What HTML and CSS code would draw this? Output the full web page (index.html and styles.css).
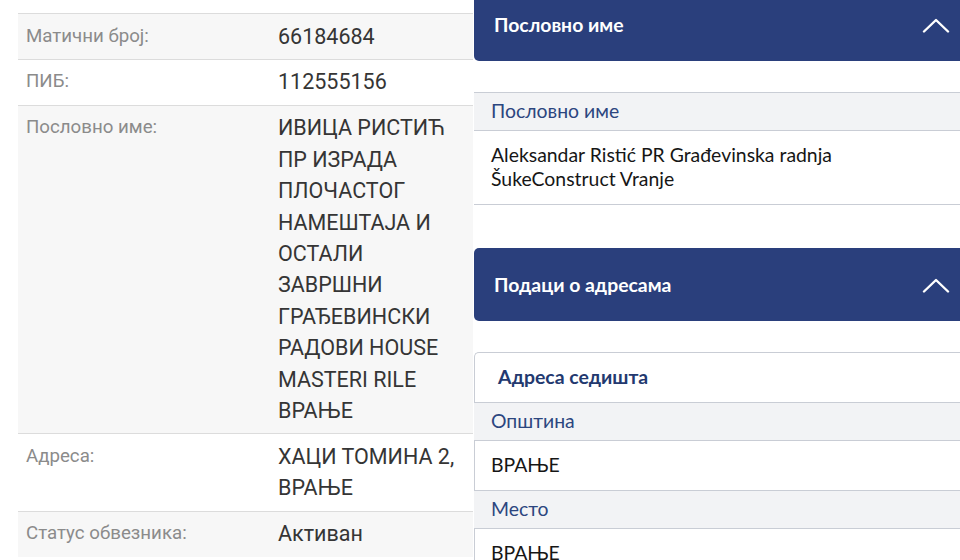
FILE: index.html
```html
<!DOCTYPE html>
<html lang="sr">
<head>
<meta charset="utf-8">
<title>Подаци о привредном субјекту</title>
<link rel="stylesheet" href="styles.css">
</head>
<body>
<div class="page">
  <section class="left">
    <table class="info">
      <tr class="shade"><th>Матични број:</th><td>66184684</td></tr>
      <tr><th>ПИБ:</th><td>112555156</td></tr>
      <tr class="shade"><th>Пословно име:</th><td>ИВИЦА РИСТИЋ ПР ИЗРАДА ПЛОЧАСТОГ НАМЕШТАЈА И ОСТАЛИ ЗАВРШНИ ГРАЂЕВИНСКИ РАДОВИ HOUSE MASTERI RILE ВРАЊЕ</td></tr>
      <tr><th>Адреса:</th><td>ХАЦИ ТОМИНА 2, ВРАЊЕ</td></tr>
      <tr class="shade"><th>Статус обвезника:</th><td>Активан</td></tr>
    </table>
  </section>
  <section class="right">
    <div class="inner">
      <div class="acc-head top">
        <span>Пословно име</span>
        <svg class="chev" width="28" height="16" viewBox="0 0 28 16"><path d="M2 14.5 L14 3 L26 14.5" fill="none" stroke="#fff" stroke-width="2.4" stroke-linecap="round" stroke-linejoin="round"/></svg>
      </div>
      <div class="acc-body">
        <div class="lbl">Пословно име</div>
        <div class="val">Aleksandar Ristić PR Građevinska radnja<br>ŠukeConstruct Vranje</div>
      </div>
      <div class="acc-head second">
        <span>Подаци о адресама</span>
        <svg class="chev" width="28" height="16" viewBox="0 0 28 16"><path d="M2 14.5 L14 3 L26 14.5" fill="none" stroke="#fff" stroke-width="2.4" stroke-linecap="round" stroke-linejoin="round"/></svg>
      </div>
      <div class="addr-box">
        <div class="addr-title">Адреса седишта</div>
        <div class="lbl">Општина</div>
        <div class="val">ВРАЊЕ</div>
        <div class="lbl">Место</div>
        <div class="val">ВРАЊЕ</div>
      </div>
    </div>
  </section>
</div>
</body>
</html>
```
FILE: styles.css
```css
html, body {
  margin: 0;
  padding: 0;
  background: #fff;
}
body {
  width: 960px;
  height: 560px;
  overflow: hidden;
}
.page {
  display: flex;
  width: 960px;
  height: 560px;
  overflow: hidden;
}

/* left panel */
.left {
  width: 473px;
  flex: none;
  padding: 13px 0 0 18px;
  box-sizing: border-box;
  overflow: hidden;
  font-family: Roboto, "Liberation Sans", sans-serif;
}
.info {
  width: 470px;
  border-collapse: collapse;
  table-layout: fixed;
}
.info tr {
  border-top: 1px solid #dcdcdc;
  background: #fff;
}
.info tr.shade {
  background: #f7f7f7;
}
.info th {
  width: 252px;
  padding: 6.5px 0 7px 8px;
  text-align: left;
  vertical-align: top;
  font-weight: 400;
  font-size: 18.7px;
  line-height: 31.4px;
  color: #8b8b8b;
}
.info td {
  padding: 6.5px 30px 7px 0;
  vertical-align: top;
  font-size: 21.5px;
  line-height: 31.4px;
  color: #353535;
}

/* right panel */
.right {
  flex: 1;
  overflow: hidden;
  background: #fff;
  font-family: Lato, "Open Sans", sans-serif;
}
.inner {
  width: 496px;
  margin-left: 1px;
}
.acc-head {
  display: flex;
  align-items: center;
  justify-content: space-between;
  background: #2a3f7c;
  color: #fff;
  font-weight: 700;
  font-size: 19.4px;
  padding: 0 20px 0 20px;
  box-sizing: border-box;
}
.acc-head.top {
  height: 61px;
  padding-bottom: 12px;
  border-radius: 0 0 5px 5px;
}
.acc-head.second {
  height: 73px;
  margin-top: 43px;
  border-radius: 5px;
}
.chev {
  display: block;
}
.acc-body {
  margin-top: 31px;
  border-top: 1.5px solid #c9cdd5;
}
.lbl {
  background: #f2f3f5;
  color: #2c467f;
  font-size: 19.4px;
  line-height: 24px;
  padding: 5.5px 17px 7px;
  border-bottom: 1.5px solid #c9cdd5;
}
.val {
  color: #161616;
  font-size: 19.4px;
  line-height: 24px;
  padding: 12.5px 17px 13px;
  border-bottom: 1.5px solid #c9cdd5;
}
.addr-box {
  margin-top: 31px;
  border-top: 1px solid #c9cdd5;
  border-left: 1px solid #c9cdd5;
  border-top-left-radius: 5px;
}
.addr-title {
  color: #23396f;
  font-weight: 700;
  font-size: 19.4px;
  line-height: 24px;
  padding: 12px 23px 13px;
  border-bottom: 1.5px solid #c9cdd5;
}
.addr-box .lbl, .addr-box .val {
  margin-left: -1px;
}
```
